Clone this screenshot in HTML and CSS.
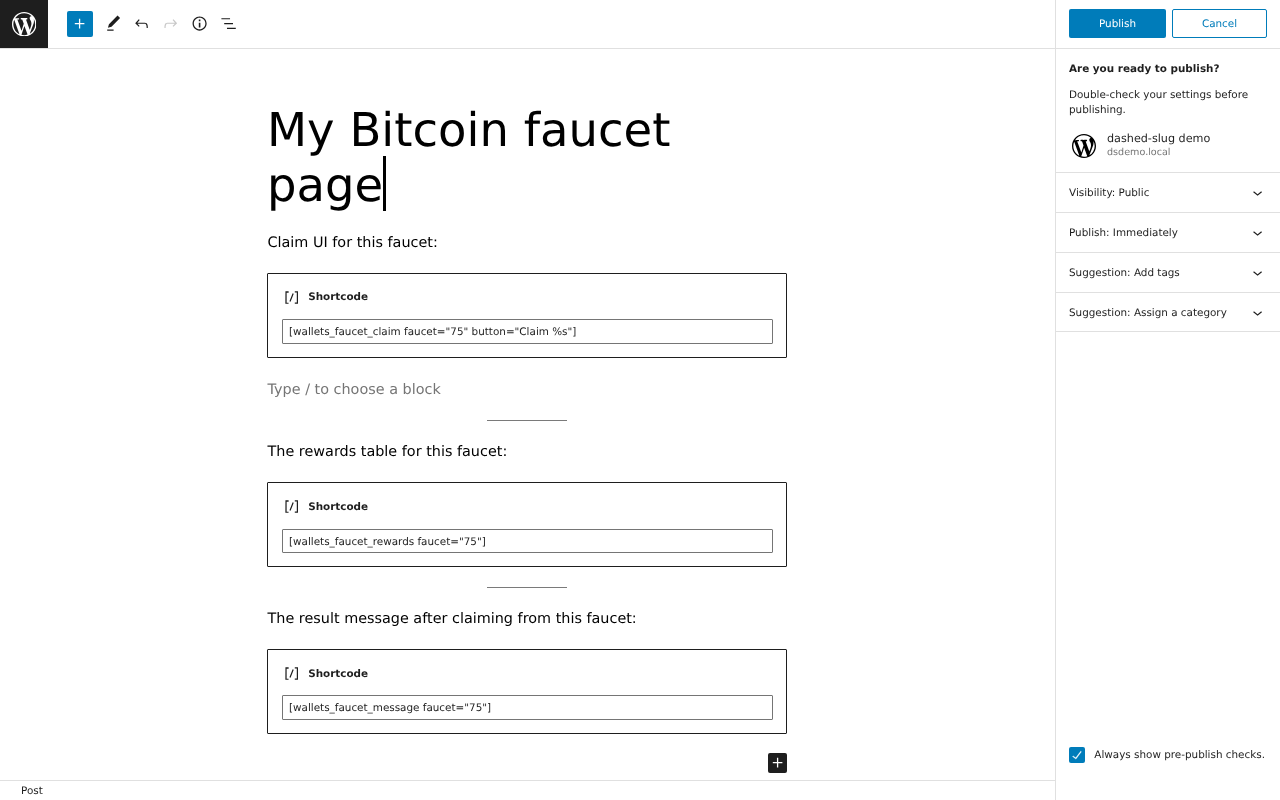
FILE: index.html
```html
<!DOCTYPE html>
<html lang="en">
<head>
<meta charset="utf-8">
<title>My Bitcoin faucet page</title>
<link rel="stylesheet" href="styles.css">
</head>
<body>
<div class="app">
  <div class="main">
    <header class="toolbar">
      <a class="wp-tile"><svg class="wp-logo" viewBox="0 0 20 20"><path d="M20 10c0-5.51-4.49-10-10-10C4.48 0 0 4.49 0 10c0 5.52 4.48 10 10 10 5.51 0 10-4.48 10-10zM7.78 15.37L4.37 6.22c.55-.02 1.17-.08 1.17-.08.5-.06.44-1.13-.06-1.11 0 0-1.45.11-2.37.11-.18 0-.37 0-.58-.01C4.12 2.69 6.87 1.11 10 1.11c2.33 0 4.45.87 6.05 2.34-.68-.11-1.65.39-1.65 1.58 0 .74.45 1.36.9 2.1.35.61.55 1.36.55 2.46 0 1.49-1.4 5-1.4 5l-3.03-8.37c.54-.02.82-.17.82-.17.5-.05.44-1.25-.06-1.22 0 0-1.44.12-2.38.12-.87 0-2.33-.12-2.33-.12-.5-.03-.56 1.2-.06 1.22l.92.08 1.26 3.41zM17.41 10c.24-.64.74-1.87.43-4.25.7 1.29 1.05 2.71 1.05 4.25 0 3.29-1.73 6.24-4.4 7.78.97-2.59 1.94-5.2 2.92-7.78zM6.1 18.09C3.12 16.65 1.11 13.53 1.11 10c0-1.3.23-2.48.72-3.59C3.25 10.3 4.67 14.2 6.1 18.09zm4.03-6.63l2.58 6.98c-.86.29-1.76.45-2.71.45-.79 0-1.57-.11-2.29-.33.81-2.38 1.62-4.74 2.42-7.1z"/></svg></a>
      <div class="tools">
        <span class="add"><svg viewBox="0 0 24 24" class="i"><path d="M18 11.2h-5.2V6h-1.6v5.2H6v1.6h5.2V18h1.6v-5.2H18z"/></svg></span>
        <svg viewBox="0 0 24 24" class="i tool"><path d="M20.1 5.1L16.9 2 6.2 12.7l-1.3 4.4 4.5-1.3L20.1 5.1zM4 20.8h8v-1.5H4v1.5z"/></svg>
        <svg viewBox="0 0 24 24" class="i tool"><path d="M18.3 11.7c-.6-.6-1.4-.9-2.3-.9H6.7l2.9-3.3-1.1-1-4.5 5L8.5 16l1-1-2.7-2.7H16c.5 0 .9.2 1.3.5 1 1 1 3.4 1 4.5v.3h1.5v-.2c0-1.5 0-4.3-1.5-5.7z"/></svg>
        <svg viewBox="0 0 24 24" class="i tool off"><path d="M15.6 6.5l-1.1 1 2.9 3.3H8c-.9 0-1.7.3-2.3.9-1.4 1.5-1.4 4.2-1.4 5.6v.2h1.5v-.3c0-1.1 0-3.5 1-4.5.3-.3.7-.5 1.3-.5h9.2L14.5 15l1.1 1.1 4.6-4.6-4.6-5z"/></svg>
        <svg viewBox="0 0 24 24" class="i tool"><path d="M12 3.2c-4.8 0-8.8 3.9-8.8 8.8 0 4.8 3.9 8.8 8.8 8.8 4.8 0 8.8-3.9 8.8-8.8 0-4.8-4-8.8-8.8-8.8zm0 16c-4 0-7.2-3.3-7.2-7.2C4.8 8 8 4.8 12 4.8s7.2 3.3 7.2 7.2c0 4-3.2 7.2-7.2 7.2zM11 17h2v-6h-2v6zm0-8h2V7h-2v2z"/></svg>
        <svg viewBox="0 0 24 24" class="i tool"><path d="M13.8 5.2H3v1.5h10.8zM17.5 11.2h-11v1.5h11zM21 17.2H10v1.5h11z"/></svg>
      </div>
    </header>
    <main class="canvas">
      <div class="column">
        <h1 class="title">My Bitcoin faucet page<span class="caret"></span></h1>
        <p class="para first">Claim UI for this faucet:</p>
        <section class="shortcode">
          <div class="sc-label"><svg viewBox="0 0 24 24" class="i sc-icon"><path d="M16 4.2v1.5h2.5v12.5H16v1.5h4V4.2h-4zM4.2 19.8h4v-1.5H5.8V5.8h2.5V4.2h-4l-.1 15.6zm5.1-3.1l1.4.6 4-10-1.4-.6-4 10z"/></svg>Shortcode</div>
          <div class="sc-input">[wallets_faucet_claim faucet="75" button="Claim %s"]</div>
        </section>
        <p class="para placeholder">Type / to choose a block</p>
        <hr class="sep sep-a">
        <p class="para">The rewards table for this faucet:</p>
        <section class="shortcode">
          <div class="sc-label"><svg viewBox="0 0 24 24" class="i sc-icon"><path d="M16 4.2v1.5h2.5v12.5H16v1.5h4V4.2h-4zM4.2 19.8h4v-1.5H5.8V5.8h2.5V4.2h-4l-.1 15.6zm5.1-3.1l1.4.6 4-10-1.4-.6-4 10z"/></svg>Shortcode</div>
          <div class="sc-input">[wallets_faucet_rewards faucet="75"]</div>
        </section>
        <hr class="sep sep-b">
        <p class="para">The result message after claiming from this faucet:</p>
        <section class="shortcode">
          <div class="sc-label"><svg viewBox="0 0 24 24" class="i sc-icon"><path d="M16 4.2v1.5h2.5v12.5H16v1.5h4V4.2h-4zM4.2 19.8h4v-1.5H5.8V5.8h2.5V4.2h-4l-.1 15.6zm5.1-3.1l1.4.6 4-10-1.4-.6-4 10z"/></svg>Shortcode</div>
          <div class="sc-input">[wallets_faucet_message faucet="75"]</div>
        </section>
        <div class="append"><span class="append-btn"><svg viewBox="0 0 24 24" class="i"><path d="M18 11.2h-5.2V6h-1.6v5.2H6v1.6h5.2V18h1.6v-5.2H18z"/></svg></span></div>
      </div>
    </main>
    <footer class="status">Post</footer>
  </div>
  <aside class="panel">
    <div class="panel-head">
      <button class="btn primary">Publish</button>
      <button class="btn outline">Cancel</button>
    </div>
    <div class="intro">
      <p class="ready">Are you ready to publish?</p>
      <p class="check">Double-check your settings before publishing.</p>
      <div class="site">
        <svg class="site-logo" viewBox="0 0 20 20"><path d="M20 10c0-5.51-4.49-10-10-10C4.48 0 0 4.49 0 10c0 5.52 4.48 10 10 10 5.51 0 10-4.48 10-10zM7.78 15.37L4.37 6.22c.55-.02 1.17-.08 1.17-.08.5-.06.44-1.13-.06-1.11 0 0-1.45.11-2.37.11-.18 0-.37 0-.58-.01C4.12 2.69 6.87 1.11 10 1.11c2.33 0 4.45.87 6.05 2.34-.68-.11-1.65.39-1.65 1.58 0 .74.45 1.36.9 2.1.35.61.55 1.36.55 2.46 0 1.49-1.4 5-1.4 5l-3.03-8.37c.54-.02.82-.17.82-.17.5-.05.44-1.25-.06-1.22 0 0-1.44.12-2.38.12-.87 0-2.33-.12-2.33-.12-.5-.03-.56 1.2-.06 1.22l.92.08 1.26 3.41zM17.41 10c.24-.64.74-1.87.43-4.25.7 1.29 1.05 2.71 1.05 4.25 0 3.29-1.73 6.24-4.4 7.78.97-2.59 1.94-5.2 2.92-7.78zM6.1 18.09C3.12 16.65 1.11 13.53 1.11 10c0-1.3.23-2.48.72-3.59C3.25 10.3 4.67 14.2 6.1 18.09zm4.03-6.63l2.58 6.98c-.86.29-1.76.45-2.71.45-.79 0-1.57-.11-2.29-.33.81-2.38 1.62-4.74 2.42-7.1z"/></svg>
        <div class="site-text"><div class="site-name">dashed-slug demo</div><div class="site-url">dsdemo.local</div></div>
      </div>
    </div>
    <div class="row"><span>Visibility: Public</span><svg viewBox="0 0 24 24" class="i chev"><path d="M17.5 11.6L12 16l-5.5-4.4.9-1.2L12 14l4.5-3.6 1 1.2z"/></svg></div>
    <div class="row"><span>Publish: Immediately</span><svg viewBox="0 0 24 24" class="i chev"><path d="M17.5 11.6L12 16l-5.5-4.4.9-1.2L12 14l4.5-3.6 1 1.2z"/></svg></div>
    <div class="row"><span>Suggestion: Add tags</span><svg viewBox="0 0 24 24" class="i chev"><path d="M17.5 11.6L12 16l-5.5-4.4.9-1.2L12 14l4.5-3.6 1 1.2z"/></svg></div>
    <div class="row row-last"><span>Suggestion: Assign a category</span><svg viewBox="0 0 24 24" class="i chev"><path d="M17.5 11.6L12 16l-5.5-4.4.9-1.2L12 14l4.5-3.6 1 1.2z"/></svg></div>
    <div class="always">
      <span class="checkbox"><svg viewBox="0 0 24 24" class="i"><path d="M18.3 5.6L9.9 16.9l-4.6-3.4-.9 1.2 5.8 4.3 9.3-12.6z"/></svg></span>
      <span class="always-text">Always show pre-publish checks.</span>
    </div>
  </aside>
</div>
</body>
</html>
```
FILE: styles.css
```css
* { box-sizing: border-box; }
html, body { margin: 0; height: 100%; }
body { font-family: "DejaVu Sans", sans-serif; color: #1e1e1e; background: #fff; overflow: hidden; text-rendering: geometricPrecision; }
.app { display: flex; width: 1280px; height: 800px; will-change: transform; }
.main { width: 1055px; display: flex; flex-direction: column; }
.i { display: block; fill: currentColor; }

.toolbar { height: 49px; flex: none; display: flex; border-bottom: 1px solid #e0e0e0; }
.wp-tile { width: 48px; height: 48px; background: #1e1e1e; display: flex; align-items: center; justify-content: center; }
.wp-logo { width: 24.5px; height: 24.5px; fill: #fff; }
.tools { display: flex; align-items: center; padding-left: 19px; gap: 9.6px; }
.add { width: 26px; height: 26px; background: #007cba; color: #fff; border-radius: 2px; display: flex; align-items: center; justify-content: center; margin-right: 1px; }
.add .i { width: 19.2px; height: 19.2px; }
.tool { width: 19.2px; height: 19.2px; color: #1e1e1e; }
.off { color: #c8c8c8; }

.canvas { flex: 1; min-height: 0; overflow: hidden; color: #000; }
.column { width: 520px; margin-left: 267px; padding-top: 54px; }
.title { margin: 0; font-size: 46.5px; line-height: 55px; font-weight: 400; }
.caret { display: inline-block; width: 3px; height: 55px; background: #000; vertical-align: top; margin-top: -2px; }
.para { margin: 0; font-size: 14.4px; line-height: 24px; padding-left: 0.5px; }
.para.first { margin-top: 17.6px; }
.placeholder { margin-top: 20.4px; color: #757575; }
.shortcode { height: 85px; margin-top: 18px; border: 1px solid #1e1e1e; border-radius: 1px; padding: 13.6px 13px 0 14px; background: #fff; }
.sc-label { display: flex; align-items: center; gap: 7px; height: 20px; font-size: 10.4px; font-weight: 700; color: #1e1e1e; }
.sc-icon { width: 19.2px; height: 19.2px; }
.sc-input { margin-top: 11.8px; height: 24.6px; border: 1px solid #757575; border-radius: 1px; padding-left: 6px; font-size: 10.4px; line-height: 24.6px; color: #1e1e1e; }
.sep { width: 80px; height: 1px; border: 0; margin: 0 auto; background: #7a7a7a; }
.sep-a { margin-top: 18px; margin-bottom: 19.4px; }
.sep-b { margin-top: 19.6px; margin-bottom: 19px; }
.append { display: flex; justify-content: flex-end; margin-top: 19px; }
.append-btn { width: 19.2px; height: 19.8px; background: #1e1e1e; color: #fff; border-radius: 2px; display: flex; align-items: center; justify-content: center; }
.append-btn .i { width: 19.2px; height: 19.2px; }

.status { height: 20px; flex: none; border-top: 1px solid #e0e0e0; padding-left: 21px; font-size: 10.4px; line-height: 21px; color: #1e1e1e; }

.panel { width: 225px; border-left: 1px solid #e0e0e0; display: flex; flex-direction: column; font-size: 10.4px; color: #1e1e1e; }
.panel-head { height: 49px; flex: none; border-bottom: 1px solid #e0e0e0; display: flex; padding: 9px 13px 0; gap: 6px; }
.btn { height: 29px; font: 10.4px "DejaVu Sans", sans-serif; text-rendering: geometricPrecision; border-radius: 2px; padding: 0; }
.primary { width: 97px; background: #007cba; border: 0; color: #fff; }
.outline { width: 95px; background: #fff; border: 1px solid #007cba; color: #007cba; }
.intro { height: 124px; flex: none; padding: 13px 13px 0; border-bottom: 1px solid #e0e0e0; }
.ready { margin: 0; font-weight: 700; line-height: 14px; }
.check { margin: 12px 0 0; line-height: 15px; }
.site { display: flex; align-items: center; margin-top: 13px; gap: 9px; }
.site-logo { width: 28px; height: 28px; fill: #000; padding: 2px; margin: 1px 0 0 1px; }
.site-name { line-height: 14px; font-size: 11.2px; }
.site-url { line-height: 13px; font-size: 9.6px; color: #757575; }
.row { height: 40px; flex: none; display: flex; align-items: center; justify-content: space-between; padding: 0 13px 0 13px; border-bottom: 1px solid #e0e0e0; }
.row-last { height: 39px; padding-top: 1px; }
.chev { width: 19.2px; height: 19.2px; flex: none; }
.always { margin-top: auto; margin-bottom: 37px; display: flex; align-items: center; gap: 9.3px; padding-left: 13px; }
.always-text { margin-top: -1px; }
.checkbox { width: 16px; height: 16px; background: #007cba; color: #fff; border-radius: 2px; display: flex; align-items: center; justify-content: center; }
.checkbox .i { width: 14px; height: 14px; stroke: currentColor; stroke-width: 0.6; }
```
